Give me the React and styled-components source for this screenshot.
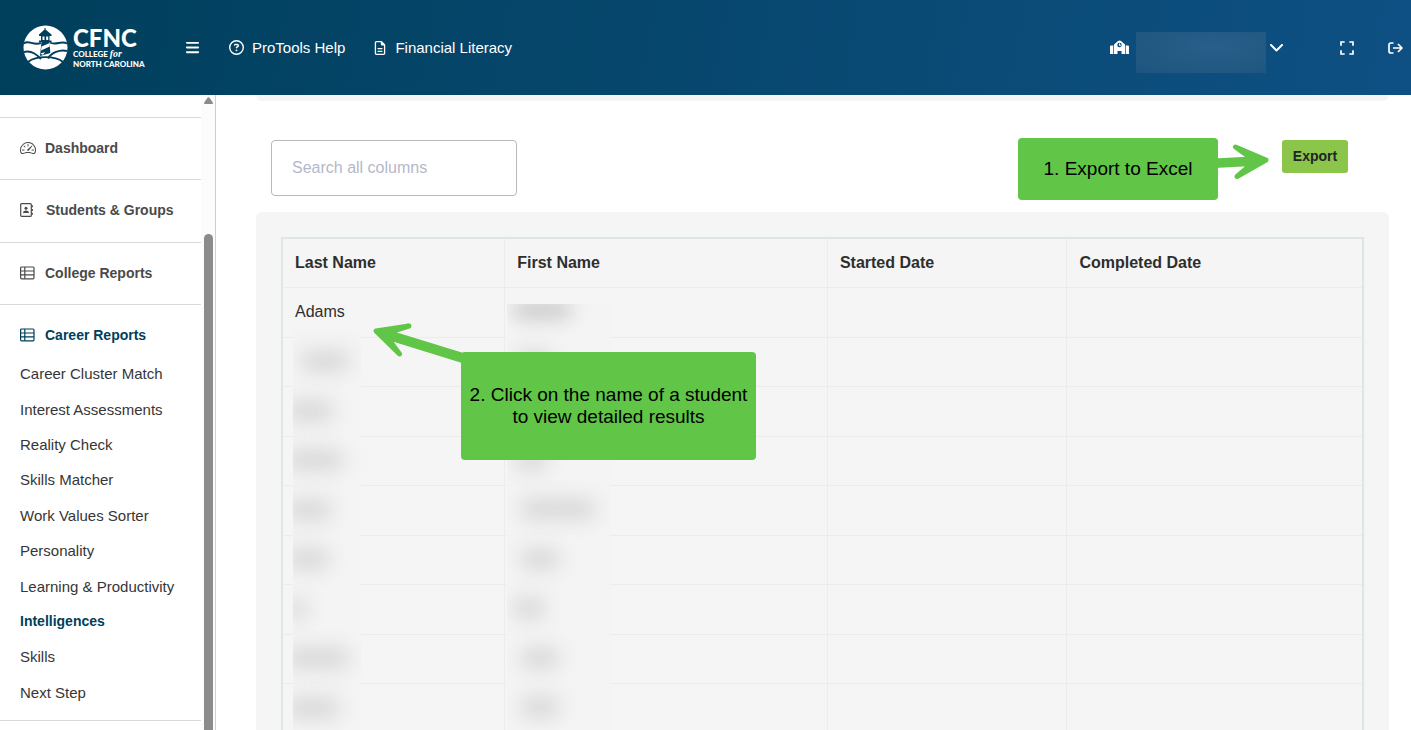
import React from "react";
import styled, { createGlobalStyle, css } from "styled-components";
import { FaBars, FaRegCircleQuestion, FaRegFileLines } from "react-icons/fa6";
import { BsSpeedometer2 } from "react-icons/bs";

const GlobalStyle = createGlobalStyle`
  *, *::before, *::after { box-sizing: border-box; }
  body { margin: 0; background: #fff; color: #2e2e2e; font-family: "Liberation Sans", Arial, sans-serif; font-size: 16px; }
`;

const green = "#61c547";

const Page = styled.div`
  display: flex;
  flex-direction: column;
  height: 100vh;
  overflow: hidden;
`;

/* ---------- header ---------- */
const Header = styled.header`
  flex: none;
  display: flex;
  align-items: center;
  height: 95px;
  padding: 0 8px 0 23px;
  color: #fff;
  background: linear-gradient(100deg, #003f5b, #0e5083);
`;

const Logo = styled.a`
  display: flex;
  align-items: center;
  gap: 5px;
  width: 162px;
  color: #fff;
  text-decoration: none;
`;

const LogoWords = styled.span`
  display: flex;
  flex-direction: column;
  font-family: Lato, sans-serif;
  font-size: 8px;
  font-weight: 900;
  line-height: 10px;
  white-space: nowrap;
`;

const LogoName = styled.span`
  font-size: 24px;
  line-height: 22px;
`;

const LogoFor = styled.em`
  font-family: "Liberation Serif", serif;
  font-size: 10px;
  font-weight: 700;
`;

const IconButton = styled.button`
  display: flex;
  padding: 0;
  border: 0;
  color: inherit;
  background: none;
`;

const HeaderNav = styled.nav`
  display: flex;
  gap: 28px;
  margin-left: 29px;
`;

const HeaderLink = styled.a`
  display: flex;
  align-items: center;
  gap: 8px;
  color: #fff;
  font-size: 15px;
  text-decoration: none;
`;

const HeaderTools = styled.div`
  display: flex;
  align-items: center;
  margin-left: auto;
`;

const SchoolPicker = styled.button`
  display: flex;
  align-items: center;
  gap: 4px;
  margin-right: 57px;
  padding: 0;
  border: 0;
  color: inherit;
  background: none;
`;

const HiddenSchool = styled.span`
  width: 130px;
  height: 41px;
  margin: 9px 0 0 3px;
  background: radial-gradient(ellipse at 60% 35%, #295f8a, #215983 60%, #1c5580);
`;

const ExpandButton = styled(IconButton)`
  margin-right: 34px;
`;

/* ---------- sidebar ---------- */
const Body = styled.div`
  flex: 1;
  display: flex;
  min-height: 0;
`;

const Sidebar = styled.aside`
  flex: none;
  display: flex;
  width: 216px;
  border-right: 1px solid #cfcfcf;
  overflow: hidden;
`;

const Menu = styled.ul`
  flex: 1;
  margin: 0;
  padding: 22px 0 0;
  list-style: none;
`;

const MenuItem = styled.li`
  border-top: 1px solid #dadada;
  &:nth-child(2) { padding-bottom: 1px; }
`;

const MenuLink = styled.a`
  display: flex;
  align-items: center;
  gap: 9px;
  height: 61px;
  padding: 0 0 2px 20px;
  color: ${(p) => (p.$active ? "#003f5b" : "#4a4a4a")};
  font-size: 14px;
  font-weight: 700;
  text-decoration: none;
  svg { flex: none; }
`;

const SubMenu = styled.ul`
  display: grid;
  grid-auto-rows: 1fr;
  height: 354px;
  margin: -10px 0 10px;
  padding: 0;
  list-style: none;
`;

const SubLink = styled.a`
  display: flex;
  align-items: center;
  height: 100%;
  padding-left: 20px;
  color: #363636;
  font-size: 15px;
  text-decoration: none;
  ${(p) => p.$active && css`color: #003f5b; font-size: 14px; font-weight: 700;`}
`;

const ScrollTrack = styled.div`
  display: flex;
  flex-direction: column;
  align-items: center;
  width: 14px;
  padding-top: 2px;
  background: #fcfcfc;
`;

const ScrollThumb = styled.div`
  flex: 1;
  width: 9px;
  margin-top: 130px;
  border-radius: 5px 5px 0 0;
  background: #8b8b8b;
`;

/* ---------- main ---------- */
const Main = styled.main`
  flex: 1;
  min-width: 0;
  padding: 0 22px 0 40px;
  overflow: hidden;
`;

const UpperPanel = styled.div`
  height: 6px;
  border-radius: 0 0 6px 6px;
  background: #f5f5f5;
`;

const Toolbar = styled.div`
  display: flex;
  align-items: flex-start;
  justify-content: space-between;
  padding: 39px 41px 16px 15px;
`;

const Search = styled.input`
  width: 246px;
  height: 56px;
  padding: 0 20px;
  border: 1px solid #b9b9b9;
  border-radius: 4px;
  font: inherit;
  &::placeholder { color: #b5b8c9; opacity: 1; }
`;

const ExportArea = styled.div`
  position: relative;
`;

const ExportButton = styled.button`
  display: block;
  width: 66px;
  height: 33px;
  padding: 0 0 2px;
  border: 0;
  border-radius: 3px;
  color: #212529;
  background: #8bc64a;
  font: 700 14px "Liberation Sans", Arial, sans-serif;
`;

const Callout = styled.div`
  position: absolute;
  z-index: 2;
  display: flex;
  align-items: center;
  justify-content: center;
  border-radius: 4px;
  color: #000;
  background: ${green};
  font-size: 19px;
  line-height: 22px;
  text-align: center;
  white-space: nowrap;
  svg { position: absolute; overflow: visible; }
`;

const ExportCallout = styled(Callout)`
  top: -2px;
  right: calc(100% + 64px);
  width: 200px;
  height: 62px;
  svg { top: 0; left: 100%; }
`;

const NameCallout = styled(Callout)`
  top: 115px;
  left: 180px;
  width: 295px;
  height: 108px;
  svg { top: -32px; left: -91px; }
`;

const Card = styled.section`
  padding: 25px;
  border-radius: 6px;
  background: #f5f5f5;
`;

const TableArea = styled.div`
  position: relative;
`;

const Table = styled.table`
  width: 100%;
  border: 2px solid #dee6e4;
  border-spacing: 0;
  table-layout: fixed;
  text-align: left;
`;

const cell = css`
  padding: 0 12px;
  border-bottom: 1px solid #ececec;
  &:not(:last-child) { border-right: 1px solid #ececec; }
`;

const Th = styled.th`
  ${cell}
  height: 49px;
`;

const Td = styled.td`
  ${cell}
  height: 49px;
  padding-bottom: 2px;
  tr:nth-child(odd) > & { height: 50px; }
`;

const Redaction = styled.div`
  position: absolute;
  bottom: 0;
  overflow: hidden;
  background: #f4f4f4;
`;

const LastNames = styled(Redaction)`
  top: 93px;
  left: 12px;
  width: 68px;
  padding-top: 6px;
`;

const FirstNames = styled(Redaction)`
  top: 67px;
  left: 226px;
  width: 103px;
`;

const SmudgeRow = styled.div`
  display: flex;
  align-items: center;
  height: 50px;
  &:nth-child(even) { height: 49px; }
  ${(p) => p.$cut && css`&& { height: 32px; align-items: flex-start; }`}
`;

const Smudge = styled.span`
  height: 20px;
  background: #d6d6d6;
  border-radius: 8px;
  filter: blur(10px);
  ${(p) => p.$cut && css`height: 12px; background: #b4b4b4;`}
`;

/* ---------- drawings ---------- */
const Lighthouse = () => (
  <svg width="45" height="45" viewBox="0 0 45 45" aria-hidden="true">
    <circle cx="22.5" cy="22.5" r="22" fill="#fff" />
    <path
      fill="#013f5c"
      d="M21.500 3h1v1.500L28.500 9.500V11H26.500V15.500H28.500V17H26.500L27.300 28L17 31L18.500 17H16V15.500H18V11H16V9.500L21.500 4.500Z"
    />
    <path d="M19.500 11.500h2v3.500h-2zM23.200 11.500h2v3.500h-2z" fill="#fff" />
    <path d="M18.500 21.500L26.800 18V21.500L18 25.500ZM17.500 28.500L22 27L20 30Z" fill="#fff" />
    <g fill="none" stroke="#013f5c" strokeWidth="1.900">
      <path d="M.8 18.500C6 14.500 10 21 18 18" />
      <path d="M27 17.500C33 21 38 15 44.200 18.500" />
      <path d="M1 27C9 25 14 30 18 34" />
      <path d="M44 26C37 24 28 28 25 33.500" />
      <path d="M5 37C13 30.500 32 30.500 40 37" />
    </g>
  </svg>
);

const SchoolIcon = () => (
  <svg width="19" height="15" viewBox="0 0 19 15" fill="currentColor" aria-hidden="true">
    <path d="M0 6.500q0-1 1-1h2.300V14H0zM15.700 5.500H18q1 0 1 1V14h-3.300z" />
    <path fillRule="evenodd" d="M4 14V4.500L8 1Q9.500-.2 11 1L15 4.500V14h-3.500v-3h-4v3zM9.500 2.800a2.200 2.200 0 1 0 0 4.400a2.200 2.200 0 0 0 0-4.400z" />
    <path d="M9 3.600h1v1.200h1v1H9z" />
  </svg>
);

const ChevronIcon = () => (
  <svg width="13" height="8" viewBox="0 0 13 8" fill="none" stroke="currentColor" strokeWidth="2" strokeLinecap="round" strokeLinejoin="round" aria-hidden="true">
    <path d="M1 1l5.500 5.500L12 1" />
  </svg>
);

const ExpandIcon = () => (
  <svg width="14" height="14" viewBox="0 0 14 14" fill="none" stroke="currentColor" strokeWidth="1.700" aria-hidden="true">
    <path d="M1 4.700V1h3.700M9.300 1H13v3.700M13 9.300V13H9.300M4.700 13H1V9.300" />
  </svg>
);

const LogoutIcon = () => (
  <svg width="15" height="12" viewBox="0 0 15 12" fill="none" stroke="currentColor" strokeWidth="1.700" strokeLinejoin="round" aria-hidden="true">
    <path d="M5.500 1H3Q1 1 1 3v6q0 2 2 2h2.500M5 6h9M10 2l4 4-4 4" />
  </svg>
);

const ContactsIcon = () => (
  <svg width="17" height="16" viewBox="0 0 17 16" fill="none" stroke="currentColor" strokeWidth="1.200" aria-hidden="true">
    <rect x=".7" y="1.600" width="10.600" height="12.800" rx="1" />
    <circle cx="6" cy="6.200" r="1.500" fill="currentColor" stroke="none" />
    <path d="M3 11q0-2.500 3-2.500T9 11z" fill="currentColor" stroke="none" />
    <path d="M12.300 3.200v2M12.300 7v2M12.300 10.800v2" />
  </svg>
);

const TableIcon = () => (
  <svg width="16" height="14" viewBox="0 0 16 14" fill="none" stroke="currentColor" strokeWidth="1.200" aria-hidden="true">
    <rect x=".6" y="1" width="13.400" height="11.800" rx="1" />
    <path d="M.6 5h13.400M.6 8.900h13.400M4.800 1v11.800" />
  </svg>
);

const RightArrow = () => (
  <svg width="52" height="44" viewBox="0 0 52 44" fill={green} stroke={green} strokeWidth="5" strokeLinejoin="round" aria-hidden="true">
    <path d="M-4 23L34 20.900L17.500 9L48 22L19 38.500L34 25.600L-4 27.500Z" />
  </svg>
);

const LeftArrow = () => (
  <svg width="96" height="44" viewBox="370 320 96 44" fill={green} stroke={green} strokeWidth="5" strokeLinejoin="round" aria-hidden="true">
    <path d="M376 331L409 326L388 332.500L466 356.500V361.500L387 337L399.500 354Z" />
  </svg>
);

const menu = [
  ["Dashboard", <BsSpeedometer2 size={16} />],
  ["Students & Groups", <ContactsIcon />],
  ["College Reports", <TableIcon />],
];

const careerReports = [
  "Career Cluster Match", "Interest Assessments", "Reality Check", "Skills Matcher", "Work Values Sorter",
  "Personality", "Learning & Productivity", "Intelligences", "Skills", "Next Step",
];

/* start and width of each hidden name */
const lastNames = [[8, 48], [-6, 46], [-6, 56], [-6, 44], [-6, 42], [-6, 20], [-6, 62], [-6, 52]];
const firstNames = [[6, 58], [10, 34], [10, 34], [8, 32], [14, 74], [14, 38], [6, 32], [14, 38], [14, 38]];

const rows = ["Adams", "", "", "", "", "", "", "", "", ""];

export default function App() {
  return (
    <Page>
      <GlobalStyle />
      <Header>
        <Logo href="#home">
          <Lighthouse />
          <LogoWords>
            <LogoName>CFNC</LogoName>
            <span>COLLEGE <LogoFor>for</LogoFor></span>
            <span>NORTH CAROLINA</span>
          </LogoWords>
        </Logo>
        <IconButton aria-label="Toggle menu"><FaBars size={15} /></IconButton>
        <HeaderNav>
          <HeaderLink href="#help"><FaRegCircleQuestion size={15} />ProTools Help</HeaderLink>
          <HeaderLink href="#literacy"><FaRegFileLines size={14} />Financial Literacy</HeaderLink>
        </HeaderNav>
        <HeaderTools>
          <SchoolPicker aria-label="School">
            <SchoolIcon />
            <HiddenSchool />
            <ChevronIcon />
          </SchoolPicker>
          <ExpandButton aria-label="Full screen"><ExpandIcon /></ExpandButton>
          <IconButton aria-label="Log out"><LogoutIcon /></IconButton>
        </HeaderTools>
      </Header>
      <Body>
        <Sidebar>
          <Menu>
            {menu.map(([label, icon]) => (
              <MenuItem key={label}><MenuLink href="#menu">{icon}{label}</MenuLink></MenuItem>
            ))}
            <MenuItem>
              <MenuLink href="#career" $active><TableIcon />Career Reports</MenuLink>
              <SubMenu>
                {careerReports.map((label) => (
                  <li key={label}><SubLink href="#report" $active={label === "Intelligences"}>{label}</SubLink></li>
                ))}
              </SubMenu>
            </MenuItem>
            <MenuItem />
          </Menu>
          <ScrollTrack aria-hidden="true">
            <svg width="9" height="7" viewBox="0 0 9 7" fill="#8b8b8b"><path d="M3.500.8q1-1.200 2 0L8.800 5.500Q9.200 7 8 7H1Q-.2 7 .2 5.500z" /></svg>
            <ScrollThumb />
          </ScrollTrack>
        </Sidebar>
        <Main>
          <UpperPanel />
          <Toolbar>
            <Search type="search" placeholder="Search all columns" aria-label="Search all columns" />
            <ExportArea>
              <ExportButton>Export</ExportButton>
              <ExportCallout>1. Export to Excel<RightArrow /></ExportCallout>
            </ExportArea>
          </Toolbar>
          <Card>
            <TableArea>
              <Table>
                <colgroup>
                  <col style={{ width: "20.6%" }} />
                  <col style={{ width: "29.9%" }} />
                  <col style={{ width: "22.2%" }} />
                  <col />
                </colgroup>
                <thead>
                  <tr><Th>Last Name</Th><Th>First Name</Th><Th>Started Date</Th><Th>Completed Date</Th></tr>
                </thead>
                <tbody>
                  {rows.map((name, i) => (
                    <tr key={i}><Td>{name}</Td><Td /><Td /><Td /></tr>
                  ))}
                </tbody>
              </Table>
              <LastNames aria-hidden="true">
                {lastNames.map(([start, width], i) => (
                  <SmudgeRow key={i}><Smudge style={{ marginLeft: start, width }} /></SmudgeRow>
                ))}
              </LastNames>
              <FirstNames aria-hidden="true">
                {firstNames.map(([start, width], i) => (
                  <SmudgeRow key={i} $cut={i === 0}><Smudge $cut={i === 0} style={{ marginLeft: start, width }} /></SmudgeRow>
                ))}
              </FirstNames>
              <NameCallout>2. Click on the name of a student<br />to view detailed results<LeftArrow /></NameCallout>
            </TableArea>
          </Card>
        </Main>
      </Body>
    </Page>
  );
}
